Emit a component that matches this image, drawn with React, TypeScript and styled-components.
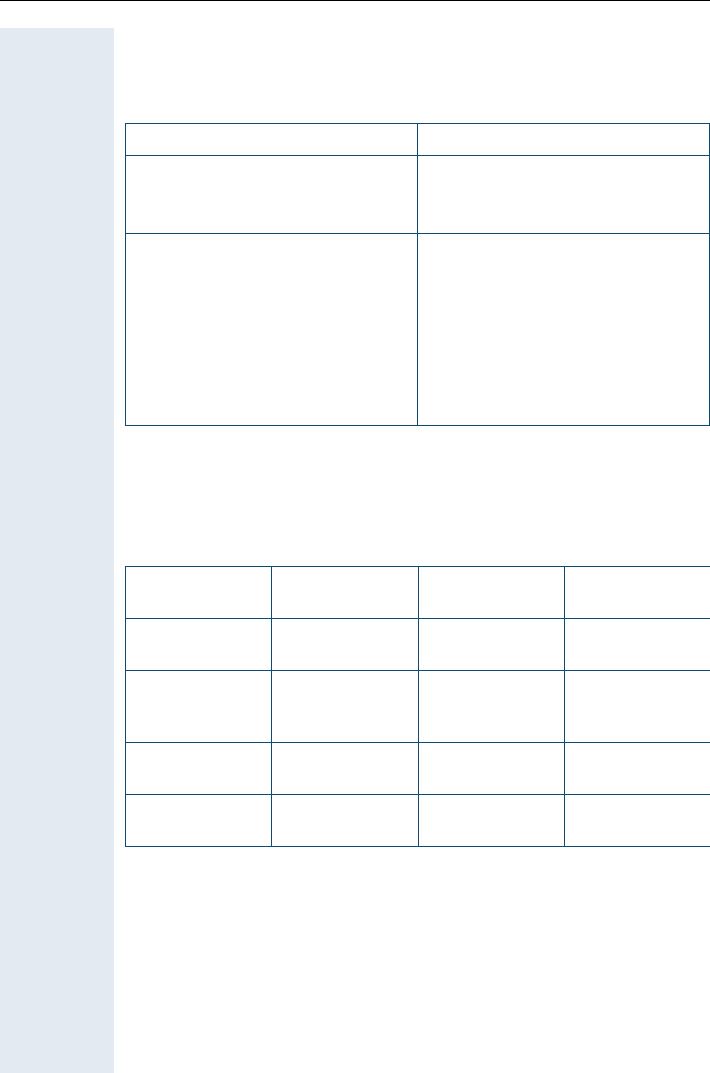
import styled, { createGlobalStyle } from 'styled-components';

const GlobalStyle = createGlobalStyle`
  html, body {
    margin: 0;
    padding: 0;
    background: #ffffff;
    font-family: "Liberation Sans", Arial, sans-serif;
  }
`

const Page = styled.div`
  display: flex;
  flex-direction: column;
  width: 710px;
  min-height: 1073px;
`

const TopRule = styled.div`
  height: 1px;
  background-color: #000000;
  margin-bottom: 27px;
`

const Body = styled.div`
  flex: 1;
  display: flex;
`

const Sidebar = styled.aside`
  width: 114px;
  flex-shrink: 0;
  background-color: #e3eaf2;
`

const Content = styled.main`
  flex: 1;
  padding: 95px 0 0 11px;
  display: flex;
  flex-direction: column;
  gap: 140px;
`

const Grid = styled.div<{ $columns: string }>`
  display: grid;
  grid-template-columns: ${p => p.$columns};
  width: max-content;
  border-top: 1px solid #0f4a74;
  border-left: 1px solid #0f4a74;
`

const Cell = styled.div<{ $height: number }>`
  box-sizing: border-box;
  height: ${p => p.$height}px;
  border-right: 1px solid #0f4a74;
  border-bottom: 1px solid #0f4a74;
`

const firstRows = [32, 78, 192]
const secondRows = [52, 52, 72, 52, 52]

function App() {
  return (
    <>
      <GlobalStyle />
      <Page>
        <TopRule />
        <Body>
          <Sidebar />
          <Content>
            <Grid $columns="292px 292px">
              {firstRows.map((h, r) =>
                [0, 1].map(c => <Cell key={`${r}-${c}`} $height={h} />)
              )}
            </Grid>
            <Grid $columns="146px 147px 146px 146px">
              {secondRows.map((h, r) =>
                [0, 1, 2, 3].map(c => <Cell key={`${r}-${c}`} $height={h} />)
              )}
            </Grid>
          </Content>
        </Body>
      </Page>
    </>
  )
}

export default App
